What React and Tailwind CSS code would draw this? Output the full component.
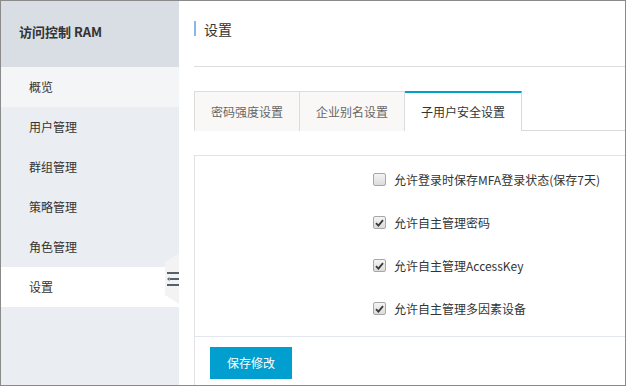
import React from "react";

const font = { fontFamily: '"Noto Sans CJK SC", "Noto Sans", sans-serif' };

const menu = ["概览", "用户管理", "群组管理", "策略管理", "角色管理", "设置"];

const options = [
  ["允许登录时保存MFA登录状态(保存7天)", false],
  ["允许自主管理密码", true],
  ["允许自主管理AccessKey", true],
  ["允许自主管理多因素设备", true],
];

function Check({ on }) {
  return (
    <span className="w-[13px] h-[13px] shrink-0 rounded-[2px] border border-[#a7a7a7] bg-gradient-to-b from-[#f4f4f4] to-[#dcdcdc] flex items-center justify-center">
      {on && (
        <svg width="9" height="8" viewBox="0 0 9 8">
          <path d="M1 4.2 L3.4 6.6 L8 1.2" fill="none" stroke="#3a3a3a" strokeWidth="1.8" />
        </svg>
      )}
    </span>
  );
}

export default function App() {
  return (
    <div
      className="w-[626px] h-[386px] border border-[#8a8a8a] flex overflow-hidden bg-white text-[#333]"
      style={font}
    >
      {/* sidebar */}
      <div className="relative w-[178px] shrink-0 bg-[#eaedf1] flex flex-col">
        <div className="h-[66px] bg-[#d9dee5] flex items-center pl-[18px] pb-[6px] text-[13px] font-bold leading-none">
          访问控制 RAM
        </div>
        {menu.map((m, i) => (
          <div
            key={m}
            className={`h-10 flex items-center pl-[28px] text-[12px] leading-none ${
              i === 0 ? "bg-[#f3f5f7]" : i === menu.length - 1 ? "bg-white" : ""
            }`}
          >
            {m}
          </div>
        ))}
        <svg
          className="absolute right-0 top-[252px]"
          width="14"
          height="51"
          viewBox="0 0 14 51"
        >
          <polygon points="14,0 14,51 0,42 0,9" fill="#f3f3f3" />
          <rect x="2" y="19" width="12" height="2" fill="#55616f" />
          <rect x="5" y="25" width="9" height="2" fill="#55616f" />
          <path d="M2 26 L4.5 24 L4.5 28 Z" fill="#55616f" />
          <rect x="2" y="31" width="12" height="2" fill="#55616f" />
        </svg>
      </div>

      {/* main */}
      <div className="flex-1 pl-[15px] flex flex-col">
        <div className="h-[66px] shrink-0 border-b border-[#dedede] flex items-center pb-[10px]">
          <span className="w-[2px] h-[15px] bg-[#8ab8e2] mr-[8px]" />
          <span className="text-[14px] leading-none">设置</span>
        </div>

        <div className="mt-[24px] flex border-b border-[#d9d9d9] h-[40px] shrink-0">
          <div className="h-[40px] px-[16px] border border-[#dcdcdc] border-b-0 bg-[#f9f8f7] flex items-center text-[12px] text-[#666] leading-none">
            密码强度设置
          </div>
          <div className="h-[40px] px-[16px] border-t border-r border-[#dcdcdc] bg-[#f9f8f7] flex items-center text-[12px] text-[#666] leading-none">
            企业别名设置
          </div>
          <div className="h-[40px] mb-[-1px] px-[16px] border-t-2 border-t-[#00a2ca] border-r border-r-[#d9d9d9] bg-white flex items-center text-[12px] leading-none">
            子用户安全设置
          </div>
        </div>

        <div className="mt-[24px] flex-1 border-t border-l border-[#e3e3e3] flex flex-col">
          <div className="pt-[2px] pb-[6px] pl-[178px] border-b border-[#e1e7ed]">
            {options.map(([label, on]) => (
              <div key={label} className="h-[43px] flex items-center gap-[8px]">
                <Check on={on} />
                <span className="text-[12px] leading-none">{label}</span>
              </div>
            ))}
          </div>
          <div className="pt-[10px] pl-[15px]">
            <button className="w-[82px] h-[32px] bg-[#009fcf] text-white text-[12px] leading-none">
              保存修改
            </button>
          </div>
        </div>
      </div>
    </div>
  );
}
